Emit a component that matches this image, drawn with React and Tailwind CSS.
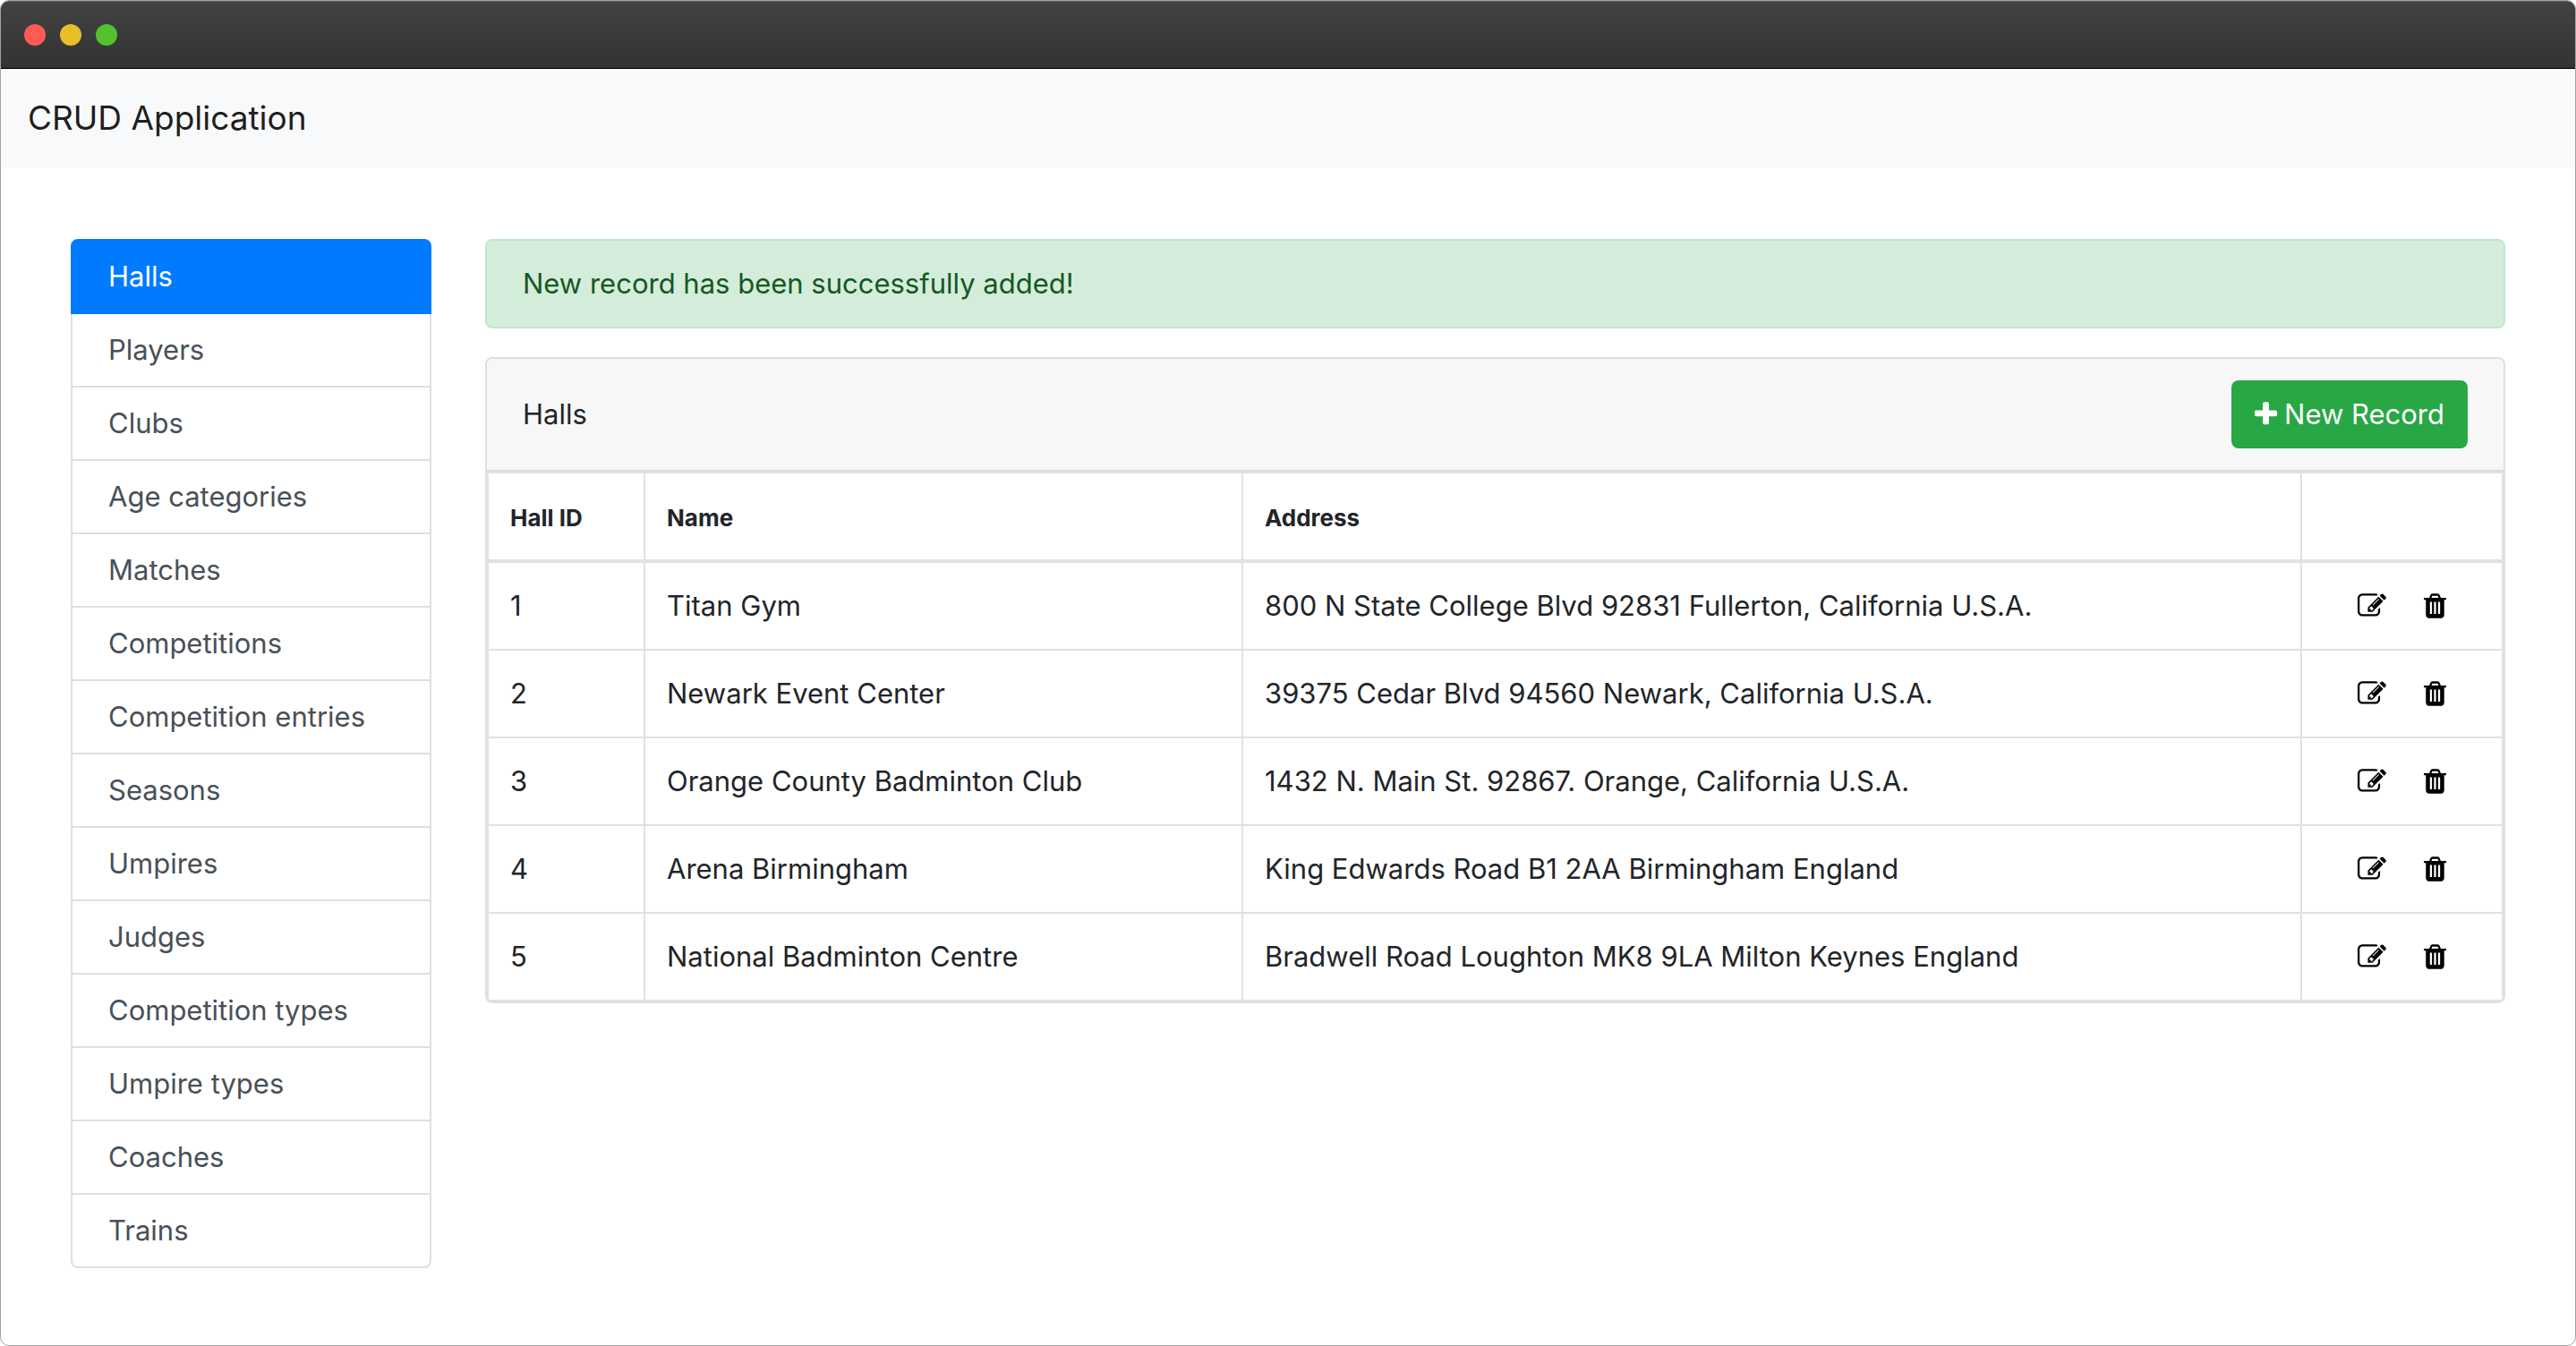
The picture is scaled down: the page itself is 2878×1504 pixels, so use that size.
const sections = [
  "Halls",
  "Players",
  "Clubs",
  "Age categories",
  "Matches",
  "Competitions",
  "Competition entries",
  "Seasons",
  "Umpires",
  "Judges",
  "Competition types",
  "Umpire types",
  "Coaches",
  "Trains",
];

const halls = [
  { id: 1, name: "Titan Gym", address: "800 N State College Blvd 92831 Fullerton, California U.S.A." },
  { id: 2, name: "Newark Event Center", address: "39375 Cedar Blvd 94560 Newark, California U.S.A." },
  { id: 3, name: "Orange County Badminton Club", address: "1432 N. Main St. 92867. Orange, California U.S.A." },
  { id: 4, name: "Arena Birmingham", address: "King Edwards Road B1 2AA Birmingham England" },
  { id: 5, name: "National Badminton Centre", address: "Bradwell Road Loughton MK8 9LA Milton Keynes England" },
];

function PlusIcon() {
  return (
    <svg viewBox="192 0 1408 1792" className="h-8 w-[25px]" fill="currentColor" aria-hidden="true">
      <path d="M1600 736v192q0 40-28 68t-68 28h-416v416q0 40-28 68t-68 28h-192q-40 0-68-28t-28-68v-416h-416q-40 0-68-28t-28-68v-192q0-40 28-68t68-28h416v-416q0-40 28-68t68-28h192q40 0 68 28t28 68v416h416q40 0 68 28t28 68z" />
    </svg>
  );
}

function EditIcon() {
  return (
    <svg viewBox="0 0 1792 1792" className="size-8" fill="currentColor" aria-hidden="true">
      <path d="M888 1184l116-116-152-152-116 116v56h96v96h56zm440-720q-16-16-33 1l-350 350q-17 17-1 33t33-1l350-350q17-17 1-33zm80 594v190q0 119-84.5 203.5t-203.5 84.5h-832q-119 0-203.5-84.5t-84.5-203.5v-832q0-119 84.5-203.5t203.5-84.5h832q63 0 117 25 15 7 18 23 3 17-9 29l-49 49q-14 14-32 8-23-6-45-6h-832q-66 0-113 47t-47 113v832q0 66 47 113t113 47h832q66 0 113-47t47-113v-126q0-13 9-22l64-64q15-15 35-7t20 29zm-96-738l288 288-672 672h-288v-288zm444 132l-92 92-288-288 92-92q28-28 68-28t68 28l152 152q28 28 28 68t-28 68z" />
    </svg>
  );
}

function TrashIcon() {
  return (
    <svg viewBox="192 0 1408 1792" className="h-8 w-[25px]" fill="currentColor" aria-hidden="true">
      <path d="M704 1376v-704q0-14-9-23t-23-9h-64q-14 0-23 9t-9 23v704q0 14 9 23t23 9h64q14 0 23-9t9-23zm256 0v-704q0-14-9-23t-23-9h-64q-14 0-23 9t-9 23v704q0 14 9 23t23 9h64q14 0 23-9t9-23zm256 0v-704q0-14-9-23t-23-9h-64q-14 0-23 9t-9 23v704q0 14 9 23t23 9h64q14 0 23-9t9-23zm-544-992h448l-48-117q-7-9-17-11h-317q-10 2-17 11zm928 32v64q0 14-9 23t-23 9h-96v948q0 83-47 143.5t-113 60.5h-832q-66 0-113-58.5t-47-141.5v-952h-96q-14 0-23-9t-9-23v-64q0-14 9-23t23-9h309l70-167q15-37 54-63t79-26h320q40 0 79 26t54 63l70 167h309q14 0 23 9t9 23z" />
    </svg>
  );
}

function TitleBar() {
  return (
    <div className="flex h-[76px] items-center gap-4 border-t border-b border-t-[#5c5c5c] border-b-black bg-linear-to-b from-[#424242] to-[#333333] px-[26px]">
      <span className="size-6 rounded-full bg-[#ff5b54]" />
      <span className="size-6 rounded-full bg-[#e6bf29]" />
      <span className="size-6 rounded-full bg-[#54c22e]" />
    </div>
  );
}

function Sidebar() {
  return (
    <nav className="w-[403px] shrink-0 self-start" aria-label="Sections">
      <ul>
        {sections.map((label, i) => (
          <li key={label} className="group">
            <a
              href="#"
              aria-current={i === 0 ? "page" : undefined}
              className={
                i === 0
                  ? "block rounded-t-lg border-2 border-[#007bff] bg-[#007bff] px-10 py-4 leading-12 text-white"
                  : "block border-x-2 border-b-2 border-[#dfdfdf] px-10 py-4 leading-12 text-[#495057] group-last:rounded-b-lg"
              }
            >
              {label}
            </a>
          </li>
        ))}
      </ul>
    </nav>
  );
}

function HallsTable() {
  const cell = "border-2 border-[#dee2e6] px-6 py-6 text-left";
  const heading = "border-2 border-[#dee2e6] px-6 pt-[26px] pb-[22px] text-left";
  return (
    <table className="w-full table-fixed border-collapse">
      <colgroup>
        <col className="w-[175px]" />
        <col className="w-[668px]" />
        <col />
        <col className="w-[225px]" />
      </colgroup>
      <thead>
        <tr className="border-b-4 border-[#dee2e6] text-[26px] font-bold">
          <th scope="col" className={heading}>Hall ID</th>
          <th scope="col" className={heading}>Name</th>
          <th scope="col" className={heading}>Address</th>
          <td className={heading} />
        </tr>
      </thead>
      <tbody>
        {halls.map((hall) => (
          <tr key={hall.id}>
            <td className={cell}>{hall.id}</td>
            <td className={cell}>{hall.name}</td>
            <td className={cell}>{hall.address}</td>
            <td className={cell}>
              <div className="flex items-center justify-center gap-[42px] text-black">
                <button type="button" aria-label={`Edit ${hall.name}`}>
                  <EditIcon />
                </button>
                <button type="button" aria-label={`Delete ${hall.name}`}>
                  <TrashIcon />
                </button>
              </div>
            </td>
          </tr>
        ))}
      </tbody>
    </table>
  );
}

export default function App() {
  return (
    <div className="min-h-screen overflow-hidden rounded-[10px] border border-[#a3a3a3] bg-white font-['Inter',sans-serif] text-[31px] leading-12 text-[#212529]">
      <TitleBar />
      <header className="bg-[#f8f9fa] px-[30px] py-6">
        <a href="#" className="text-[37px] leading-[62px] text-black/90">
          CRUD Application
        </a>
      </header>
      <div className="flex gap-15 px-[78px] py-20">
        <Sidebar />
        <main className="min-w-0 flex-1">
          <div role="status" className="rounded-lg border-2 border-[#c3e6cb] bg-[#d4edda] px-10 py-6 text-[#155724]">
            New record has been successfully added!
          </div>
          <section className="mt-8 overflow-hidden rounded-lg border-2 border-[#dfdfdf]">
            <div className="flex items-center justify-between border-b-2 border-[#d9dadb] bg-[#f7f7f7] px-10 py-6">
              <h1>Halls</h1>
              <button
                type="button"
                className="flex items-center gap-2 rounded-lg bg-[#28a745] px-[26px] py-[14px] text-white"
              >
                <PlusIcon />
                New Record
              </button>
            </div>
            <HallsTable />
          </section>
        </main>
      </div>
    </div>
  );
}
